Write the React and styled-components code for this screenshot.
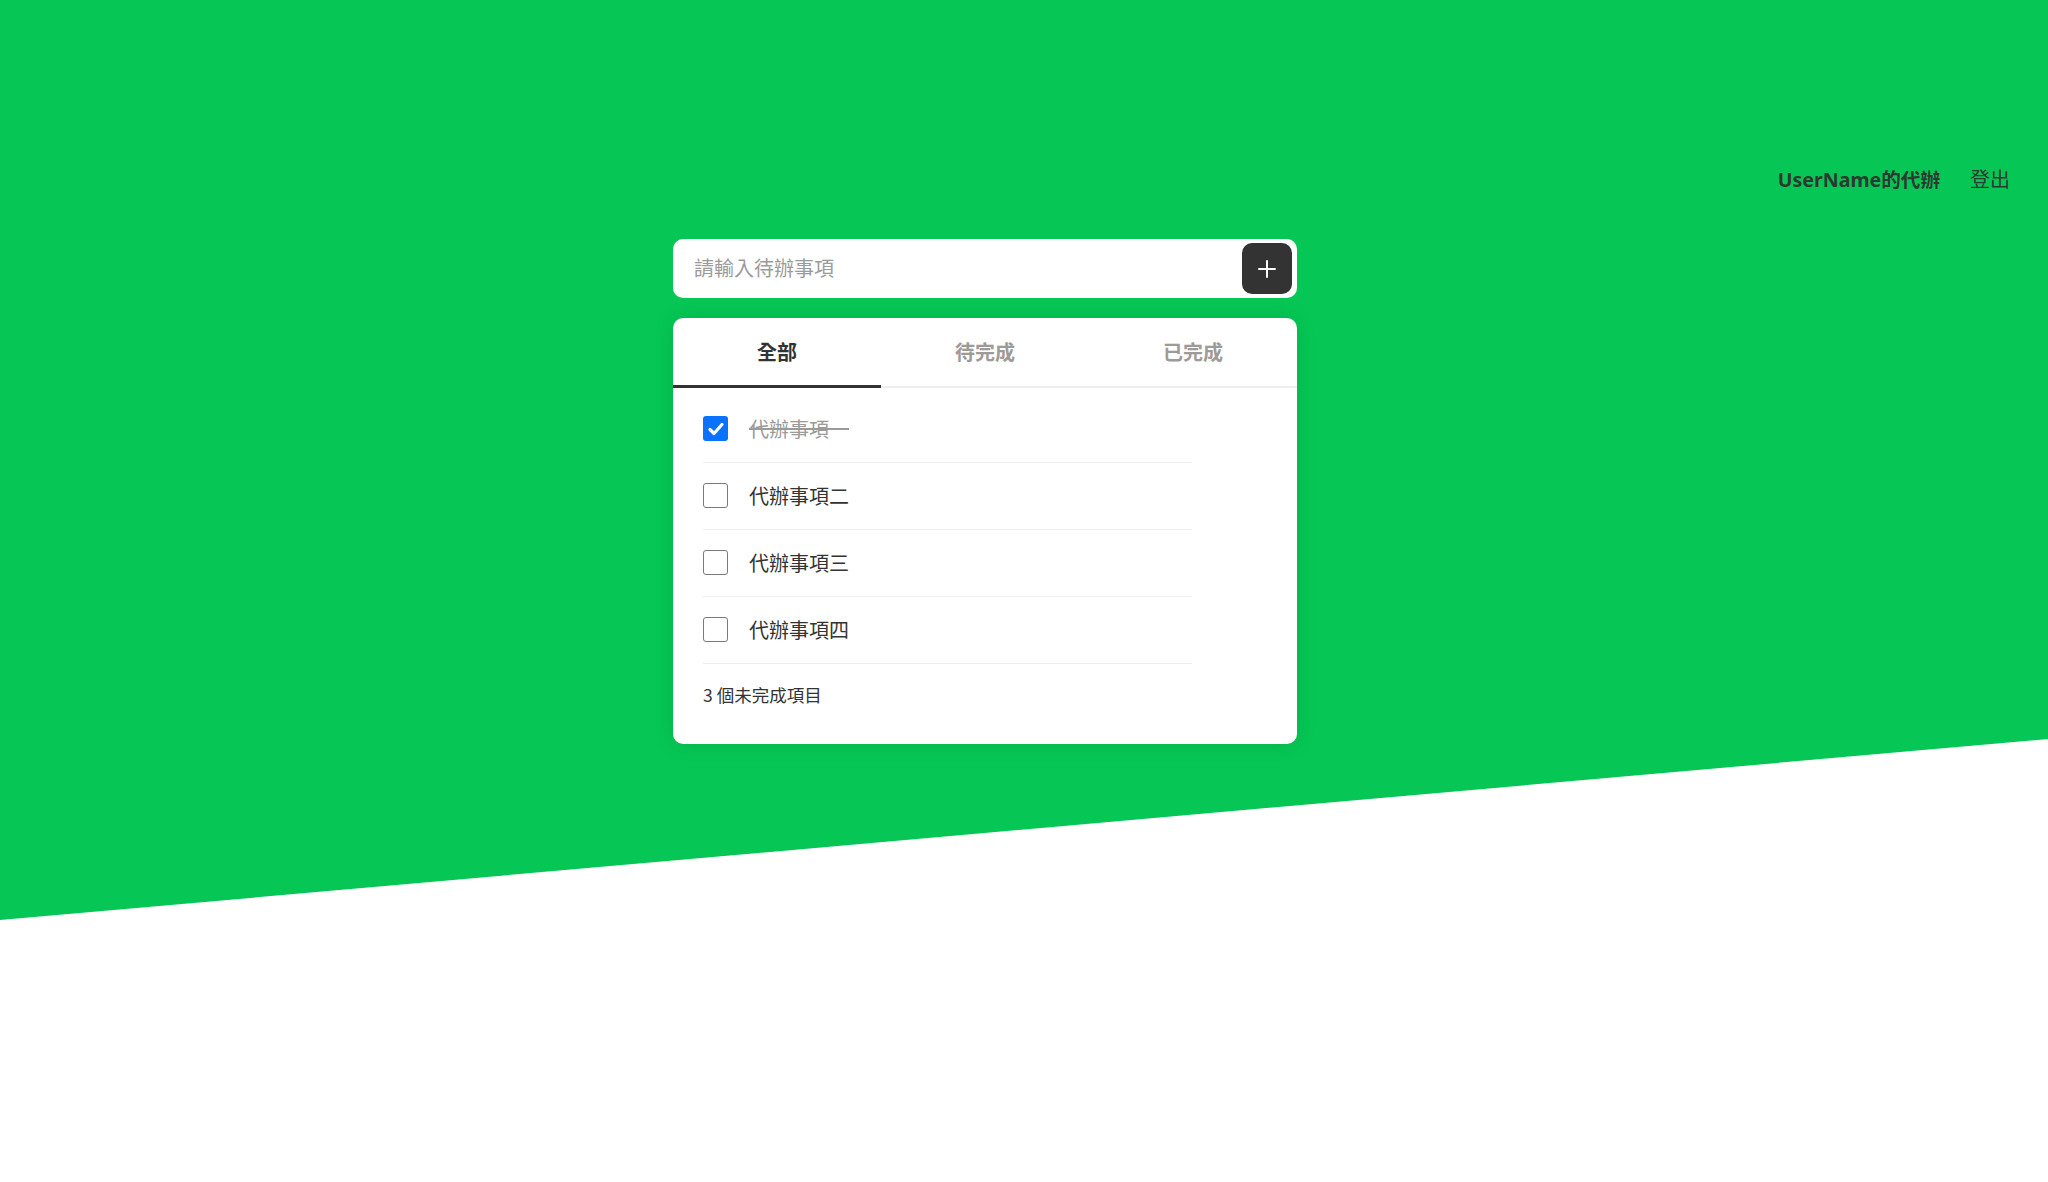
import React, { useState } from "react";
import styled, { createGlobalStyle } from "styled-components";

const GlobalStyle = createGlobalStyle`
  html, body { margin: 0; padding: 0; background: #ffffff; }
  body { font-family: "Noto Sans", "Noto Sans CJK TC", sans-serif; }
  * { box-sizing: border-box; }
`;

const Page = styled.div`
  position: relative;
  min-height: 1182px;
  overflow: hidden;
`;

const GreenBackdrop = styled.div`
  position: absolute;
  inset: 0;
  background: #06c755;
  clip-path: polygon(0 0, 100% 0, 100% 739px, 0 920px);
  z-index: 0;
`;

const Content = styled.div`
  position: relative;
  z-index: 1;
  display: flex;
  flex-direction: column;
`;

const Header = styled.header`
  display: flex;
  justify-content: flex-end;
  align-items: center;
  gap: 30px;
  padding: 165px 38px 0 0;
  height: 195px;
`;

const HeaderText = styled.span`
  font-size: ${(p) => (p.$bold ? "19.6px" : "20px")};
  line-height: 30px;
  color: #2b3a30;
  font-weight: ${(p) => (p.$bold ? 700 : 400)};
  font-family: "Noto Sans", "Noto Sans CJK TC", sans-serif;
`;

const Main = styled.main`
  width: 624px;
  margin: 44px 0 0 calc(50% - 351px);
  display: flex;
  flex-direction: column;
  gap: 20px;
`;

const InputBar = styled.div`
  display: flex;
  align-items: center;
  height: 59px;
  background: #fff;
  border-radius: 10px;
  padding: 4px 5px 4px 21px;
`;

const TodoInput = styled.input`
  flex: 1;
  border: none;
  outline: none;
  background: transparent;
  font-family: "Noto Sans CJK TC", sans-serif;
  font-size: 20px;
  color: #333;
  padding: 0 0 3px;
  &::placeholder { color: #9b9b9b; }
`;

const AddButton = styled.button`
  width: 50px;
  height: 51px;
  border: none;
  border-radius: 10px;
  background: #333333;
  display: flex;
  align-items: center;
  justify-content: center;
  padding: 0;
  cursor: pointer;
`;

const Card = styled.section`
  background: #fff;
  border-radius: 10px;
  box-shadow: 0 0 20px rgba(0, 0, 0, 0.12);
  overflow: hidden;
`;

const Tabs = styled.div`
  display: grid;
  grid-template-columns: repeat(3, 1fr);
`;

const Tab = styled.button`
  height: 70px;
  border: none;
  background: transparent;
  border-bottom: ${(p) => (p.$active ? "3px solid #333" : "2px solid #efefef")};
  padding: ${(p) => (p.$active ? "0 0 0 0" : "0 0 1px 0")};
  font-family: "Noto Sans CJK TC", sans-serif;
  font-size: 20px;
  font-weight: 700;
  color: ${(p) => (p.$active ? "#333" : "#9e9a95")};
  cursor: pointer;
`;

const List = styled.ul`
  list-style: none;
  margin: 0 105px 0 30px;
  padding: 8px 0 0;
`;

const Row = styled.li`
  display: flex;
  align-items: center;
  gap: 21px;
  height: 67px;
  border-bottom: 1px solid #efefef;
  padding-bottom: 1px;
`;

const Box = styled.span`
  width: 25px;
  height: 25px;
  border-radius: 3px;
  border: ${(p) => (p.$checked ? "none" : "1.5px solid #7a7a7a")};
  background: ${(p) => (p.$checked ? "#0b72ff" : "#fff")};
  display: flex;
  align-items: center;
  justify-content: center;
  flex-shrink: 0;
  cursor: pointer;
`;

const ItemText = styled.span`
  font-family: "Noto Sans CJK TC", sans-serif;
  font-size: 20px;
  color: ${(p) => (p.$done ? "#9a9a9a" : "#333")};
  text-decoration: ${(p) => (p.$done ? "line-through" : "none")};
`;

const Footer = styled.div`
  padding: 19px 30px 37px;
  font-family: "Noto Sans CJK TC", sans-serif;
  font-size: 17.5px;
  line-height: 24px;
  color: #333;
`;

const items = [
  { id: 1, text: "代辦事項一", done: true },
  { id: 2, text: "代辦事項二", done: false },
  { id: 3, text: "代辦事項三", done: false },
  { id: 4, text: "代辦事項四", done: false },
];

export default function App() {
  const [todos, setTodos] = useState(items);
  const toggle = (id) =>
    setTodos((t) => t.map((x) => (x.id === id ? { ...x, done: !x.done } : x)));
  const remaining = todos.filter((t) => !t.done).length;

  return (
    <Page>
      <GlobalStyle />
      <GreenBackdrop />
      <Content>
        <Header>
          <HeaderText $bold>UserName的代辦</HeaderText>
          <HeaderText>登出</HeaderText>
        </Header>
        <Main>
          <InputBar>
            <TodoInput placeholder="請輸入待辦事項" />
            <AddButton aria-label="add">
              <svg width="20" height="20" viewBox="0 0 20 20">
                <path d="M10 2v16M2 10h16" stroke="#fff" strokeWidth="2" strokeLinecap="round" />
              </svg>
            </AddButton>
          </InputBar>
          <Card>
            <Tabs>
              <Tab $active>全部</Tab>
              <Tab>待完成</Tab>
              <Tab>已完成</Tab>
            </Tabs>
            <List>
              {todos.map((t) => (
                <Row key={t.id}>
                  <Box $checked={t.done} onClick={() => toggle(t.id)}>
                    {t.done && (
                      <svg width="18" height="18" viewBox="0 0 18 18">
                        <path d="M3 9.5l4 4 8-9" stroke="#fff" strokeWidth="3.2" fill="none" strokeLinecap="round" strokeLinejoin="round" />
                      </svg>
                    )}
                  </Box>
                  <ItemText $done={t.done}>{t.text}</ItemText>
                </Row>
              ))}
            </List>
            <Footer>{remaining} 個未完成項目</Footer>
          </Card>
        </Main>
      </Content>
    </Page>
  );
}
